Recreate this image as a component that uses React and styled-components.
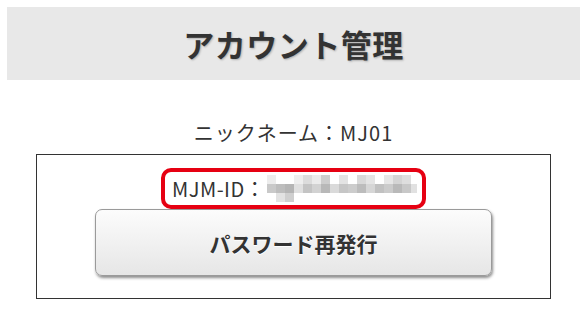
import React from "react";
import styled, { createGlobalStyle } from "styled-components";

const Global = createGlobalStyle`
  body {
    margin: 0;
    background: #fff;
    font-family: "Noto Sans CJK JP", "Noto Sans", sans-serif;
    color: #333;
  }
`;

const Page = styled.div`
  width: 586px;
  height: 336px;
  padding: 7px 6px 0 7px;
  box-sizing: border-box;
`;

const Header = styled.div`
  height: 73px;
  background: #e8e8e8;
  display: flex;
  align-items: center;
  justify-content: center;
`;

const Title = styled.h1`
  margin: 0;
  font-size: 31px;
  font-weight: 700;
  color: #333;
  letter-spacing: 0.5px;
  text-shadow: 1px 1px 2px rgba(0, 0, 0, 0.25);
`;

const Nick = styled.div`
  margin-top: 39px;
  text-align: center;
  font-size: 20px;
  line-height: 28px;
  letter-spacing: 1px;
  color: #333;
`;

const Box = styled.div`
  margin: 7px 0 0 29px;
  width: 515px;
  height: 145px;
  box-sizing: border-box;
  border: 1px solid #333;
  display: flex;
  flex-direction: column;
  align-items: center;
  padding-top: 13px;
`;

const IdMark = styled.div`
  width: 265px;
  height: 41px;
  box-sizing: border-box;
  border: 4px solid #e60012;
  border-radius: 10px;
  display: flex;
  align-items: center;
  padding-left: 7px;
  gap: 2px;
  font-size: 20px;
  letter-spacing: 0.5px;
  color: #333;
  position: relative;
  z-index: 1;
  margin-bottom: 0;
`;

const Button = styled.button`
  width: 397px;
  height: 67px;
  border: 1px solid #9a9a9a;
  border-radius: 7px;
  background: linear-gradient(#fcfcfc, #e6e6e6);
  box-shadow: 1px 2px 3px rgba(0, 0, 0, 0.45);
  font-family: "Noto Sans CJK JP", sans-serif;
  font-size: 21px;
  font-weight: 700;
  color: #333;
  text-shadow: 0 1px 0 #fff;
`;

const blur = [
  [0, 1, "#c9c9c9"], [1, 1, "#bdbdbd"], [1, 2, "#e2e2e2"], [2, 1, "#b5b5b5"], [2, 2, "#cfcfcf"],
  [3, 1, "#e0e0e0"], [4, 0, "#dcdcdc"], [4, 1, "#c4c4c4"], [5, 1, "#d2d2d2"], [6, 0, "#cdcdcd"],
  [6, 1, "#b8b8b8"], [7, 1, "#dadada"], [8, 0, "#e3e3e3"], [8, 1, "#c6c6c6"], [9, 1, "#cccccc"],
  [10, 0, "#d8d8d8"], [10, 1, "#bcbcbc"], [11, 0, "#e4e4e4"], [11, 1, "#d6d6d6"], [12, 1, "#c1c1c1"],
  [13, 0, "#e6e6e6"], [13, 1, "#cbcbcb"], [14, 0, "#d4d4d4"], [14, 1, "#b9b9b9"], [15, 0, "#dedede"],
  [15, 1, "#c8c8c8"], [16, 1, "#e1e1e1"], [0, 0, "#ececec"], [3, 0, "#eeeeee"], [5, 0, "#ebebeb"],
];

function Blurred() {
  return (
    <svg width="150" height="30" viewBox="0 0 150 30">
      {blur.map(([x, y, c], i) => (
        <rect key={i} x={x * 9} y={y * 9 + 1} width="9" height="9" fill={c} />
      ))}
    </svg>
  );
}

export default function App() {
  return (
    <Page>
      <Global />
      <Header>
        <Title>アカウント管理</Title>
      </Header>
      <Nick>ニックネーム：MJ01</Nick>
      <Box>
        <IdMark>
          <span>MJM-ID：</span>
          <Blurred />
        </IdMark>
        <Button>パスワード再発行</Button>
      </Box>
    </Page>
  );
}
